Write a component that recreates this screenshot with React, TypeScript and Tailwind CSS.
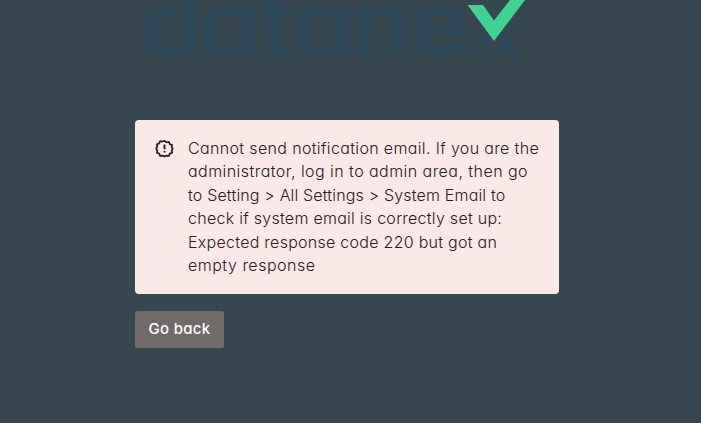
const lines = [
  { text: 'Cannot send notification email. If you are the', spacing: 'tracking-[0.35px]' },
  { text: 'administrator, log in to admin area, then go', spacing: 'tracking-[0.45px]' },
  { text: 'to Setting > All Settings > System Email to', spacing: 'tracking-[0.17px]' },
  { text: 'check if system email is correctly set up:', spacing: 'tracking-[0.27px]' },
  { text: 'Expected response code 220 but got an', spacing: 'tracking-[0.27px]' },
  { text: 'empty response', spacing: 'tracking-[0.5px]' },
];

function Logo() {
  return (
    <svg className="block h-[70px] w-[424px]" viewBox="0 0 424 70" role="img" aria-label="datanex">
      <text
        x="4.2 56.5 110.5 139.5 191.5 244 294"
        y="55.5"
        fill="#2d495a"
        transform="scale(1.12 1)"
        className="font-['Inter',sans-serif] text-[92px] font-semibold [font-feature-settings:'cv11']"
      >
        datanex
      </text>
      <path d="M332.5 5H348L359 20.5L375 0V-4H393L390 0L359 41Z" fill="#40d292" />
    </svg>
  );
}

function AlertIcon() {
  return (
    <svg className="mt-[2px] size-[19px] shrink-0" viewBox="0 0 24 24" fill="none" stroke="#25201f" strokeWidth="2.2">
      <path
        strokeLinejoin="round"
        d="M12 2.4l2.5 1.8 3-.5 1.2 2.8 2.9 1.2-.4 3L22.4 12l-1.2 2.4.4 3-2.9 1.1-1.2 2.9-3-.5L12 22.2l-2.5-1.3-3 .5-1.2-2.9-2.9-1.1.4-3L1.6 12l1.2-2.3-.4-3 2.9-1.2 1.2-2.8 3 .5z"
      />
      <path strokeWidth="2.4" d="M12 7v6M12 15v2.2" />
    </svg>
  );
}

export default function App() {
  return (
    <main className="flex h-[423px] w-full flex-col items-start overflow-hidden bg-[#37474f] pl-[135px] font-['Inter',sans-serif] [font-feature-settings:'cv11']">
      <Logo />
      <div className="mt-[50px] flex h-[174px] w-[424px] gap-[14px] rounded bg-[#fbe9e7] pt-[17px] pl-5">
        <AlertIcon />
        <p className="text-[16px] leading-[23.4px] font-light whitespace-nowrap text-[#25201f]">
          {lines.map((line) => (
            <span key={line.text} className={`block ${line.spacing}`}>
              {line.text}
            </span>
          ))}
        </p>
      </div>
      <button className="mt-[17px] h-[37px] w-[89px] rounded-[2px] bg-[#706b68] text-[15px] font-medium tracking-[0.3px] whitespace-nowrap text-white">
        Go back
      </button>
    </main>
  );
}
